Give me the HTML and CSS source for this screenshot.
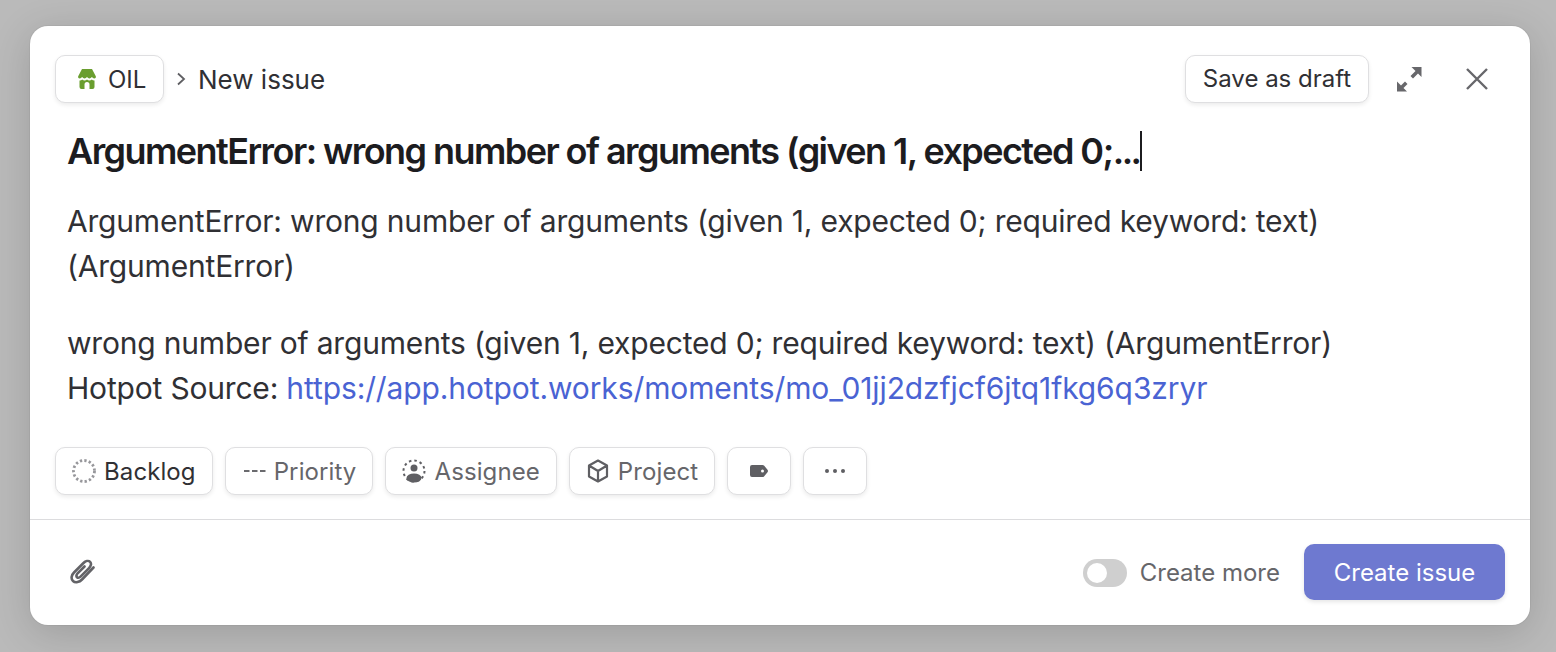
FILE: index.html
```html
<!DOCTYPE html>
<html lang="en">
<head>
<meta charset="utf-8">
<title>New issue</title>
<link rel="stylesheet" href="styles.css">
</head>
<body>
<main class="modal">
  <header class="top">
    <button class="btn team">
      <svg class="ico" width="20" height="20" viewBox="0 0 20 20"><path fill="#6a9e2f" d="M5 0h10l3.800 7.200c.5 1.200-.3 2.200-1.500 2.200-1.100 0-1.600-.9-2.400-1.500-.8.7-1.500 1.500-2.500 1.500S10.800 8.600 10 7.900C9.200 8.600 8.600 9.400 7.600 9.400S5.900 8.600 5.100 7.900C4.300 8.500 3.800 9.400 2.700 9.400 1.500 9.400.7 8.400 1.200 7.200z"/><path fill="#6a9e2f" d="M2.500 11.500c1.200.1 2-.3 2.700-1 1.500 1.200 3.300 1.200 4.800 0 1.500 1.200 3.300 1.200 4.800 0 .7.700 1.500 1.100 2.700 1V18a2 2 0 0 1-2 2h-3v-4.500a2.500 2.500 0 0 0-5 0V20h-3a2 2 0 0 1-2-2z"/></svg>
      <span>OIL</span>
    </button>
    <svg class="chev" width="12" height="14" viewBox="0 0 12 14"><path d="M3 1.500l6 5.500-6 5.500" fill="none" stroke="#5f5f63" stroke-width="1.800"/></svg>
    <span class="crumb">New issue</span>
    <span class="grow"></span>
    <button class="btn draft">Save as draft</button>
    <button class="plain expand" aria-label="Expand">
      <svg width="26" height="26" viewBox="0 0 26 26"><path fill="#67676b" d="M15.500 1H25.500V11L22 7.500 17 12.500 14.500 10 19.500 5z"/><path fill="#67676b" d="M1 15.500V25.500H11L7.500 22 11.500 18 9 15.500 5 19.500z"/></svg>
    </button>
    <button class="plain close" aria-label="Close">
      <svg width="24" height="24" viewBox="0 0 24 24"><path d="M2 2l20 20M22 2L2 22" fill="none" stroke="#67676b" stroke-width="2.400"/></svg>
    </button>
  </header>

  <h1 class="title"><span>ArgumentError: wrong number of arguments (given 1, expected 0;<span class="dots">...</span></span><span class="caret"></span></h1>

  <section class="desc">
    <p>ArgumentError: wrong number of arguments (given 1, expected 0; required keyword: text) (ArgumentError)</p>
    <p>wrong number of arguments (given 1, expected 0; required keyword: text) (ArgumentError)<br>Hotpot Source: <a href="#">https://app.hotpot.works/moments/mo_01jj2dzfjcf6jtq1fkg6q3zryr</a></p>
  </section>

  <div class="chips">
    <button class="btn chip status">
      <svg width="26" height="26" viewBox="0 0 26 26"><circle cx="13" cy="13" r="10.500" fill="none" stroke="#97979b" stroke-width="2.800" stroke-dasharray="2.300 2.200"/></svg>
      <span>Backlog</span>
    </button>
    <button class="btn chip priority">
      <svg width="22" height="4" viewBox="0 0 22 4"><path d="M0 2h5.500M8 2h5.500M16 2h5.500" stroke="#6a6a6e" stroke-width="2"/></svg>
      <span>Priority</span>
    </button>
    <button class="btn chip assignee">
      <svg width="24" height="24" viewBox="0 0 24 24"><circle cx="12" cy="12" r="10.500" fill="none" stroke="#5f5f63" stroke-width="2" stroke-dasharray="2.500 3.000"/><circle cx="12" cy="9" r="3.500" fill="#5f5f63"/><ellipse cx="12" cy="19" rx="7.500" ry="4.500" fill="#5f5f63"/></svg>
      <span>Assignee</span>
    </button>
    <button class="btn chip project">
      <svg width="22" height="24" viewBox="0 0 22 24"><path d="M11 1.500l9 5v11l-9 5-9-5v-11zM2 6.500l9 5.500 9-5.500M11 12v10.500" fill="none" stroke="#5f5f63" stroke-width="2.200" stroke-linejoin="round"/></svg>
      <span>Project</span>
    </button>
    <button class="btn chip icon" aria-label="Labels">
      <svg width="18" height="12" viewBox="0 0 18 12"><path fill="#5f5f63" d="M2 0h10.500c.6 0 1.100.2 1.500.6l3.500 4.200c.6.700.6 1.700 0 2.400L14 11.400c-.4.400-.9.600-1.500.6H2a2 2 0 0 1-2-2V2a2 2 0 0 1 2-2z"/><circle cx="12.500" cy="6" r="1.500" fill="#fff"/></svg>
    </button>
    <button class="btn chip icon" aria-label="More">
      <svg width="20" height="4" viewBox="0 0 20 4"><circle cx="2" cy="2" r="2" fill="#5f5f63"/><circle cx="10" cy="2" r="2" fill="#5f5f63"/><circle cx="18" cy="2" r="2" fill="#5f5f63"/></svg>
    </button>
  </div>

  <footer class="foot">
    <button class="plain clip" aria-label="Attach">
      <svg width="26" height="26" viewBox="0 0 26 26"><path d="M24.500 8.500L13 20.500c-2.500 2.500-6.500 3.800-9 1.500s-1.300-6.200 1-8.500L14.500 4c2-2 5-2.800 6.600-1.200s.9 4.300-1.100 6.300l-8.200 8.300c-1.100 1.100-2.800 1.700-3.800.8s-.5-2.700.6-3.800L15.500 7.500" fill="none" stroke="#636367" stroke-width="2.600" stroke-linecap="round"/></svg>
    </button>
    <span class="grow"></span>
    <span class="toggle"><span class="knob"></span></span>
    <span class="more">Create more</span>
    <button class="primary">Create issue</button>
  </footer>
</main>
</body>
</html>
```
FILE: styles.css
```css
* { box-sizing: border-box; }
html, body { height: 100%; }
body {
  margin: 0;
  padding: 26px 26px 27px 30px;
  background: #bababa;
  font-family: Inter, "Liberation Sans", sans-serif;
  color: #303034;
  overflow: hidden;
}
button { font: inherit; color: inherit; cursor: pointer; }
.modal {
  width: 1500px;
  height: 599px;
  background: #fff;
  border-radius: 18px;
  box-shadow: 0 0 0 1px rgba(0,0,0,.04), 0 8px 40px rgba(0,0,0,.16);
  display: flex;
  flex-direction: column;
  padding-top: 29px;
}
.grow { flex: 1; }
.top {
  display: flex;
  align-items: center;
  height: 48px;
  padding: 0 25px;
}
.btn {
  height: 48px;
  background: #fff;
  border: 1px solid #dfdfe1;
  border-radius: 10px;
  box-shadow: 0 2px 4px rgba(0,0,0,.08);
  display: inline-flex;
  align-items: center;
  font-size: 24px;
  padding: 0;
}
.team { width: 109px; padding-left: 21px; gap: 11px; }
.chev { margin: 0 11px 0 11px; }
.crumb { font-size: 26px; }
.draft { width: 184px; justify-content: center; padding-bottom: 1px; }
.plain { background: none; border: 0; padding: 0; display: inline-flex; align-items: center; justify-content: center; }
.expand { margin-left: 27px; }
.close { margin-left: 43px; margin-right: 16px; }
.title {
  margin: 24px 0 0 37px;
  font-size: 36px;
  line-height: 48px;
  font-weight: 600;
  letter-spacing: -1.56px;
  color: #1c1c1f;
  display: flex;
  align-items: center;
}
.dots { letter-spacing: -2.6px; }
.caret { display: inline-block; width: 2px; height: 40px; background: #1c1c1f; margin-left: 1px; }
.desc {
  margin: 24px 0 0 37px;
  width: 1290px;
  font-size: 30px;
  letter-spacing: -0.19px;
  line-height: 45px;
}
.desc p { margin: 0 0 32px; }
.desc a { color: #4a63d3; text-decoration: none; letter-spacing: -0.11px; }
.chips { display: flex; gap: 12px; padding-left: 25px; margin-top: 4px; }
.chip { gap: 8px; font-size: 24px; letter-spacing: .1px; color: #66666a; }
.status { padding: 0 16px 0 15px; gap: 7px; color: #303034; }
.priority { padding: 0 16px 0 18px; }
.assignee { padding: 0 16px 0 16px; gap: 8px; }
.project { padding: 0 16px 0 17px; gap: 9px; }
.chip.icon { width: 64px; justify-content: center; padding: 0; }
.foot {
  margin-top: 24px;
  border-top: 1px solid #dcdcde;
  flex: 1;
  display: flex;
  align-items: flex-start;
  padding: 24px 25px 0 39px;
}
.clip { margin-top: 15px; }
.toggle {
  width: 44px; height: 28px;
  border-radius: 14px;
  background: #cfcfcf;
  padding: 4px;
  display: inline-flex;
  margin: 15px 13px 0 0;
}
.knob { width: 20px; height: 20px; border-radius: 50%; background: #fff; }
.more { font-size: 24px; line-height: 57px; color: #66666a; margin-right: 24px; }
.primary {
  width: 201px; height: 56px;
  border: 0;
  border-radius: 10px;
  background: #6e79d0;
  color: #fff;
  font-size: 24px;
  padding: 1px 0 0;
  box-shadow: 0 2px 4px rgba(0,0,0,.1);
}
```
